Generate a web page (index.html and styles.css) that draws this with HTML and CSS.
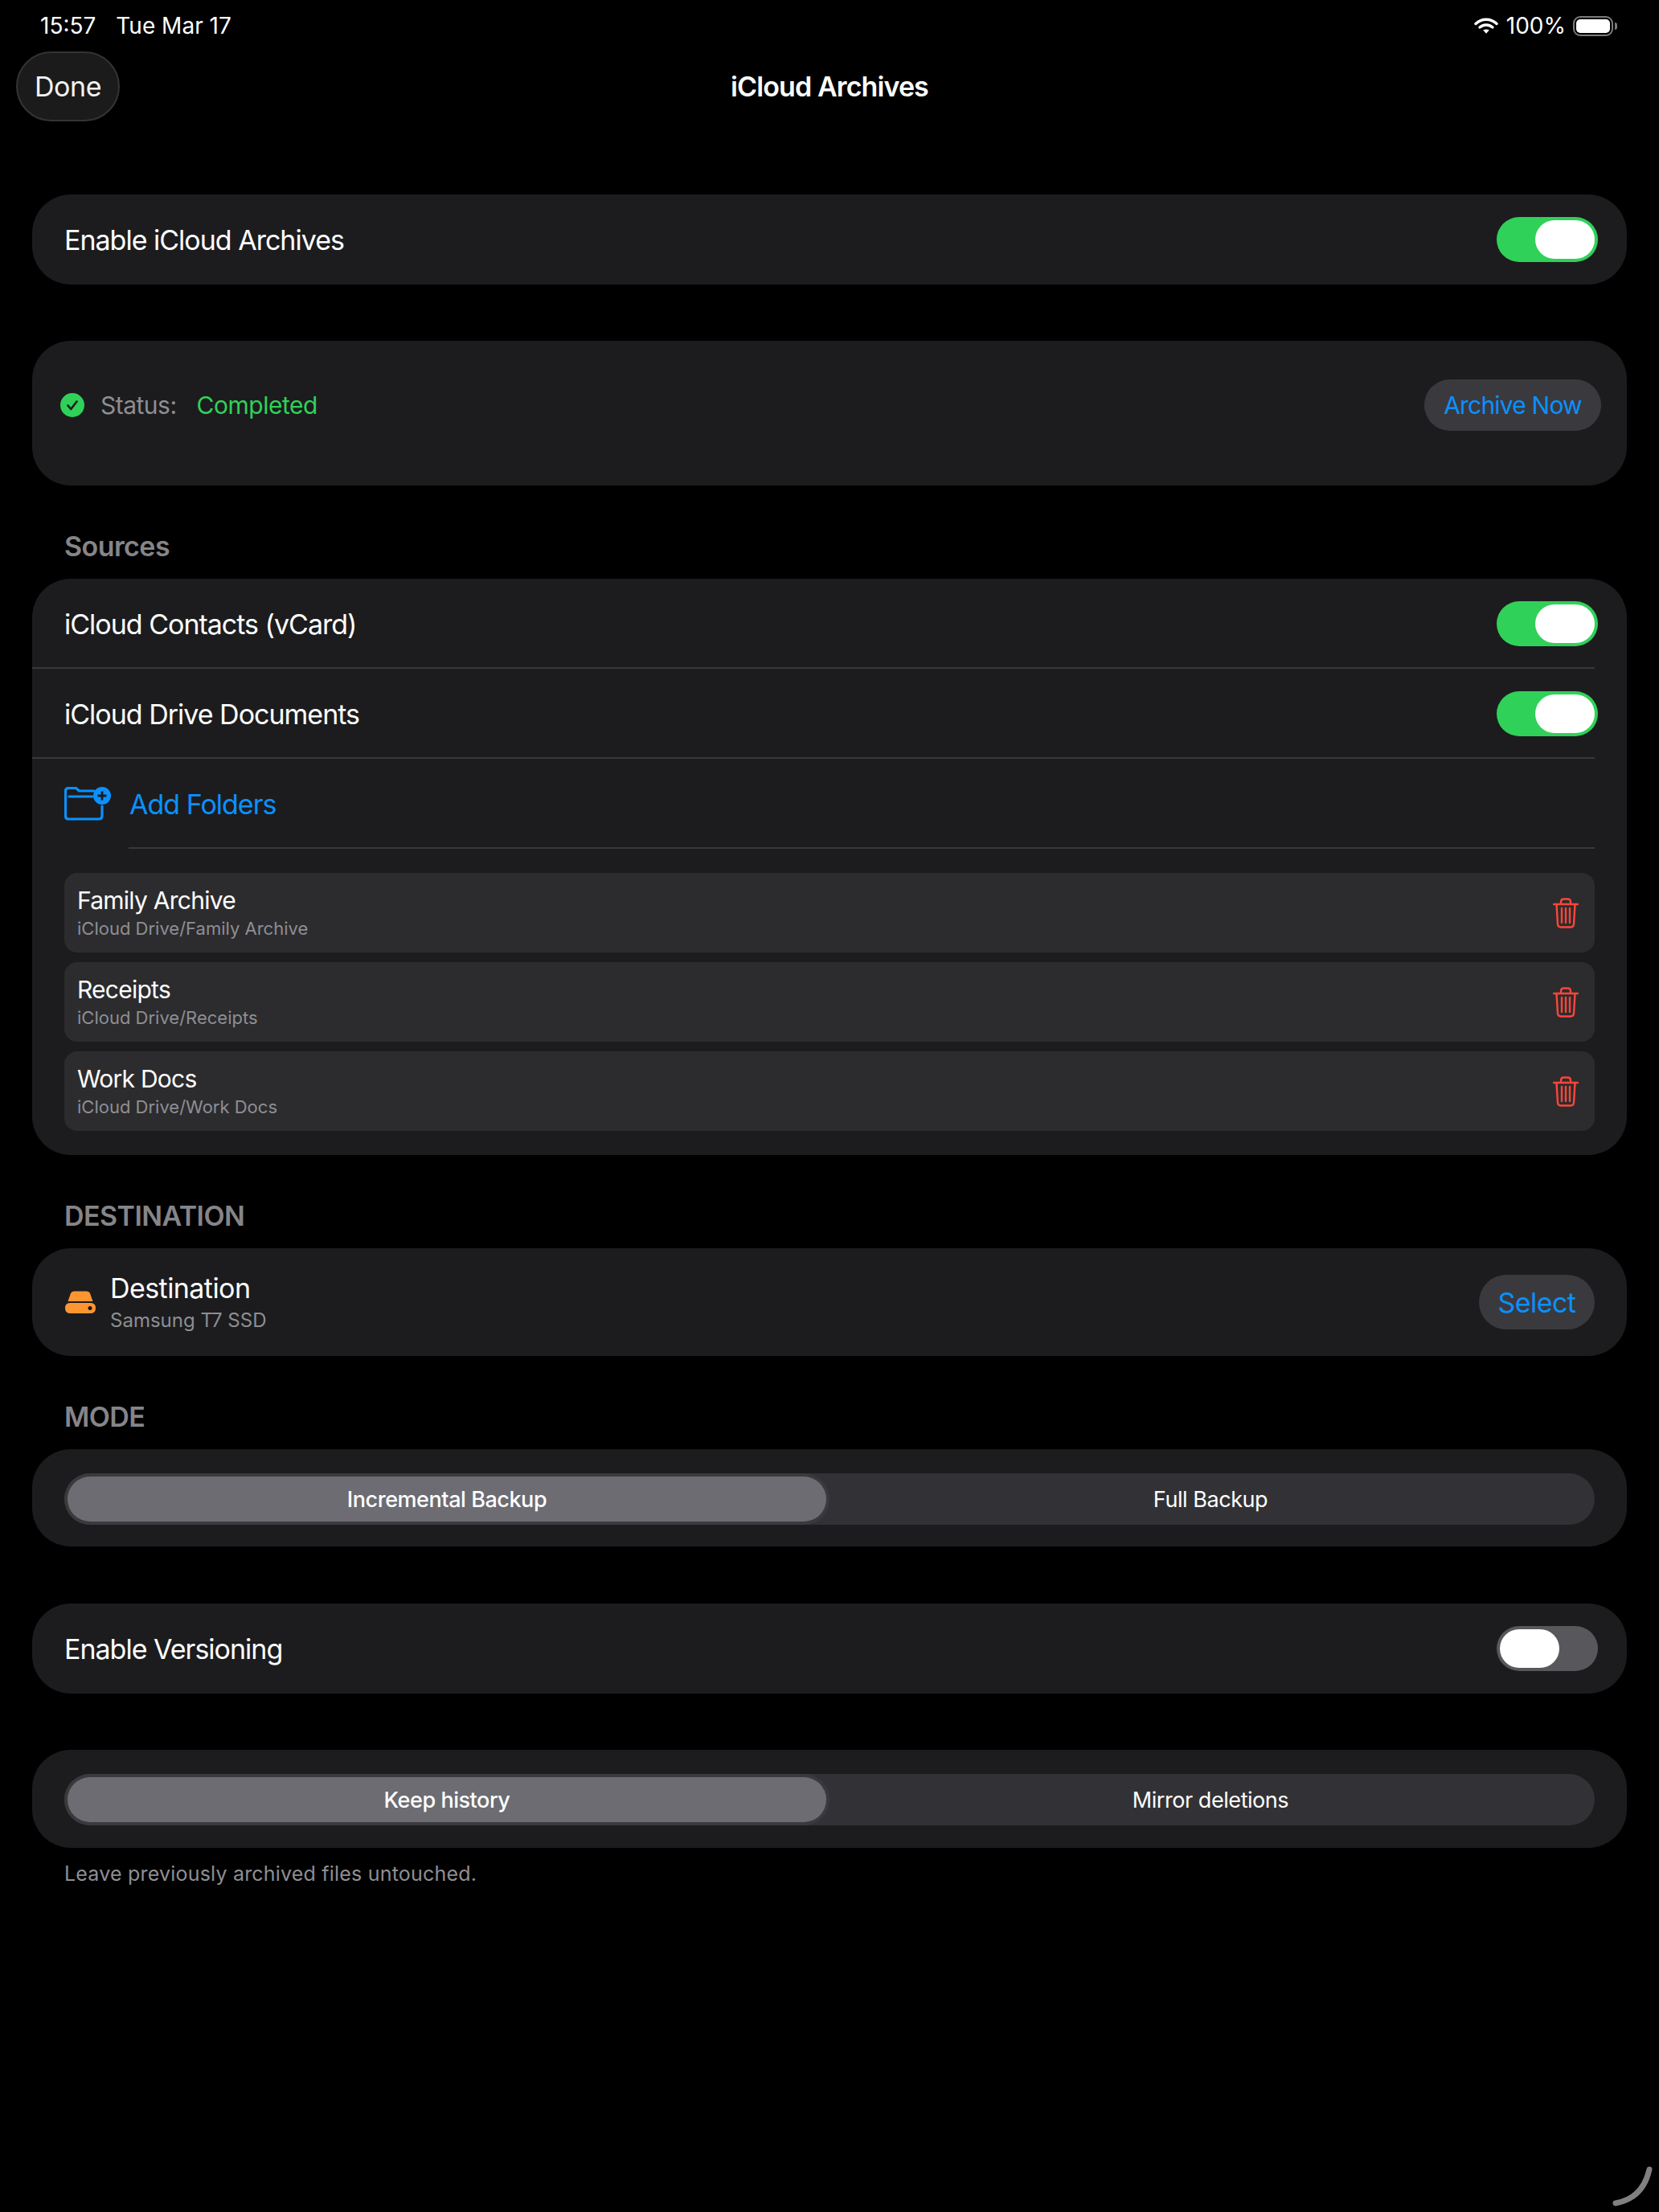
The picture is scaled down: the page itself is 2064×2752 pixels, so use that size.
FILE: index.html
```html
<!DOCTYPE html>
<html lang="en">
<head>
    <meta charset="UTF-8">
    <title>iCloud Archives</title>
    <link rel="stylesheet" href="styles.css">
</head>
<body>

<div class="statusBar">
    <div class="statusTime"><span>15:57</span><span>Tue Mar 17</span></div>
    <div class="statusRight">
        <svg class="wifiIcon" width="30" height="22" viewBox="0 0 30 22">
            <path d="M2 8.5C9.5 1.5 20.5 1.5 28 8.5" fill="none" stroke="#fff" stroke-width="3.4" stroke-linecap="round"/>
            <path d="M7 13C11.8 9 18.2 9 23 13" fill="none" stroke="#fff" stroke-width="3.4" stroke-linecap="round"/>
            <path d="M11.2 16.6C13.4 15 16.6 15 18.8 16.6L15 20.8Z" fill="#fff"/>
        </svg>
        <span>100%</span>
        <div class="battery"><div class="batteryFill"></div></div>
        <div class="batteryCap"></div>
    </div>
</div>

<div class="navBar">
    <div class="navLeft"><button class="doneButton">Done</button></div>
    <div class="navTitle">iCloud Archives</div>
    <div></div>
</div>

<div class="content">

    <div class="card cardFirst">
        <div class="row">
            <span class="rowLabel">Enable iCloud Archives</span>
            <div class="toggle"><div class="knob"></div></div>
        </div>
    </div>

    <div class="card statusCard">
        <svg class="statusIcon" width="30" height="30" viewBox="0 0 30 30">
            <circle cx="15" cy="15" r="15" fill="#30d158"/>
            <path d="M9.5 15.5L13.3 20L20.5 10.5" fill="none" stroke="#1c1c1e" stroke-width="2.6" stroke-linecap="round" stroke-linejoin="round"/>
        </svg>
        <span class="statusLabel">Status:</span>
        <span class="statusValue">Completed</span>
        <button class="pillButton archiveButton">Archive Now</button>
    </div>

    <div class="sectionTitle">Sources</div>
    <div class="card sourcesCard">
        <div class="row rowLine">
            <span class="rowLabel">iCloud Contacts (vCard)</span>
            <div class="toggle"><div class="knob"></div></div>
        </div>
        <div class="row rowLine">
            <span class="rowLabel">iCloud Drive Documents</span>
            <div class="toggle"><div class="knob"></div></div>
        </div>
        <div class="row addRow">
            <svg class="folderIcon" width="58" height="42" viewBox="0 0 58 42">
                <path d="M37 5H18.5L14.5 1.500H5.500Q1.500 1.500 1.500 5.500V36Q1.500 40 5.500 40H43Q47 40 47 36V24" fill="none" stroke="#0a91ff" stroke-width="3.200" stroke-linejoin="round" stroke-linecap="round"/>
                <path d="M6 12H35" fill="none" stroke="#0a91ff" stroke-width="3.200" stroke-linecap="round"/>
                <circle cx="47" cy="11" r="11" fill="#0a91ff"/>
                <path d="M47 5.500V16.500M41.500 11H52.500" fill="none" stroke="#1c1c1e" stroke-width="2.800"/>
            </svg>
            <span class="addLabel">Add Folders</span>
        </div>

        <div class="folderList">
            <div class="folderItem">
                <div>
                    <div class="folderName">Family Archive</div>
                    <div class="folderPath">iCloud Drive/Family Archive</div>
                </div>
                <svg class="trashIcon" width="32" height="38" viewBox="0 0 32 38">
                    <path d="M1 8H31M10 8V5Q10 1.5 13.5 1.5H18.5Q22 1.5 22 5V8M4.5 8L6 33Q6.3 36.5 10 36.5H22Q25.7 36.5 26 33L27.500 8M11 13V31M16 13V31M21 13V31" fill="none" stroke="#ff453a" stroke-width="2.400" stroke-linecap="round"/>
                </svg>
            </div>
            <div class="folderItem">
                <div>
                    <div class="folderName">Receipts</div>
                    <div class="folderPath">iCloud Drive/Receipts</div>
                </div>
                <svg class="trashIcon" width="32" height="38" viewBox="0 0 32 38">
                    <path d="M1 8H31M10 8V5Q10 1.5 13.5 1.5H18.5Q22 1.5 22 5V8M4.5 8L6 33Q6.3 36.5 10 36.5H22Q25.7 36.5 26 33L27.500 8M11 13V31M16 13V31M21 13V31" fill="none" stroke="#ff453a" stroke-width="2.400" stroke-linecap="round"/>
                </svg>
            </div>
            <div class="folderItem">
                <div>
                    <div class="folderName">Work Docs</div>
                    <div class="folderPath">iCloud Drive/Work Docs</div>
                </div>
                <svg class="trashIcon" width="32" height="38" viewBox="0 0 32 38">
                    <path d="M1 8H31M10 8V5Q10 1.5 13.5 1.5H18.5Q22 1.5 22 5V8M4.5 8L6 33Q6.3 36.5 10 36.5H22Q25.7 36.5 26 33L27.500 8M11 13V31M16 13V31M21 13V31" fill="none" stroke="#ff453a" stroke-width="2.400" stroke-linecap="round"/>
                </svg>
            </div>
        </div>
    </div>

    <div class="sectionTitle">DESTINATION</div>
    <div class="card destCard">
        <svg class="driveIcon" width="38" height="28" viewBox="0 0 38 28">
            <path d="M3.500 13L7 3Q8 0.500 11 0.500H27Q30 0.500 31 3L34.500 13Z" fill="#ff9530"/>
            <path d="M6 15H32Q38 15 38 21.500Q38 28 32 28H6Q0 28 0 21.500Q0 15 6 15Z" fill="#ff9530"/>
            <circle cx="31" cy="21.500" r="2.500" fill="#1c1c1e"/>
        </svg>
        <div class="destText">
            <div class="destName">Destination</div>
            <div class="destDrive">Samsung T7 SSD</div>
        </div>
        <button class="pillButton selectButton">Select</button>
    </div>

    <div class="sectionTitle">MODE</div>
    <div class="card segmentCard">
        <div class="segmented">
            <div class="segment segmentOn">Incremental Backup</div>
            <div class="segment">Full Backup</div>
        </div>
    </div>

    <div class="card versionCard">
        <div class="row">
            <span class="rowLabel">Enable Versioning</span>
            <div class="toggle toggleOff"><div class="knob"></div></div>
        </div>
    </div>

    <div class="card segmentCard historyCard">
        <div class="segmented">
            <div class="segment segmentOn">Keep history</div>
            <div class="segment">Mirror deletions</div>
        </div>
    </div>
    <div class="footNote">Leave previously archived files untouched.</div>

</div>

<svg class="cornerArc" width="60" height="60" viewBox="0 0 60 60">
    <path d="M6 52Q40 46 48 10" fill="none" stroke="#808080" stroke-width="7" stroke-linecap="round"/>
</svg>

</body>
</html>
```

FILE: styles.css
```css
html, body {
    margin: 0;
    padding: 0;
    background-color: #000;
}
body {
    font-family: 'Inter', 'Liberation Sans', sans-serif;
    color: #fff;
    width: 2064px;
    height: 2752px;
    overflow: hidden;
    position: relative;
}
button {
    font-family: inherit;
    border: 0;
    padding: 0;
}

/* Inter runs wider than the system font */
.statusLabel, .statusValue, .selectButton, .destName, .sectionTitle {
    letter-spacing: -0.0167em;
}
.rowLabel, .addLabel {
    letter-spacing: -1px;
}

.statusBar {
    height: 64px;
    display: flex;
    justify-content: space-between;
    align-items: center;
    padding: 0 52px 0 50px;
    font-size: 28px;
}
.statusTime {
    display: flex;
    gap: 25px;
}
.statusRight {
    display: flex;
    align-items: center;
}
.wifiIcon {
    margin-right: 10px;
}
.battery {
    width: 50px;
    height: 25px;
    box-sizing: border-box;
    border: 2px solid #7b7b7b;
    border-radius: 9px;
    padding: 2px;
    margin-left: 9px;
}
.batteryFill {
    height: 100%;
    background-color: #fff;
    border-radius: 5px;
}
.batteryCap {
    width: 3px;
    height: 9px;
    margin-left: 2px;
    background-color: #7b7b7b;
    border-radius: 0 3px 3px 0;
}

.navBar {
    height: 87px;
    display: grid;
    grid-template-columns: 1fr auto 1fr;
    align-items: center;
}
.navLeft {
    padding-left: 20px;
}
.doneButton {
    width: 129px;
    height: 87px;
    box-sizing: border-box;
    border: 2px solid #343434;
    border-radius: 44px;
    background-color: #1b1b1b;
    color: #f2f2f2;
    font-size: 34px;
    letter-spacing: -0.4px;
}
.navTitle {
    font-size: 34px;
    font-weight: 600;
    letter-spacing: -0.9px;
}

.content {
    padding: 0 40px;
}
.card {
    background-color: #1c1c1e;
    border-radius: 48px;
}
.cardFirst {
    margin-top: 91px;
}
.row {
    height: 112px;
    display: flex;
    align-items: center;
    justify-content: space-between;
    padding: 0 36px 0 40px;
    box-sizing: border-box;
}
.rowLabel {
    font-size: 34px;
}
.rowLine {
    box-shadow: inset 0 -2px 0 0 #38383a;
}

.toggle {
    width: 126px;
    height: 56px;
    box-sizing: border-box;
    padding: 4px;
    border-radius: 28px;
    background-color: #30d158;
    display: flex;
    justify-content: flex-end;
}
.toggleOff {
    background-color: #58585c;
    justify-content: flex-start;
}
.knob {
    width: 74px;
    height: 48px;
    border-radius: 24px;
    background-color: #fff;
}

.statusCard {
    margin-top: 70px;
    height: 180px;
    display: flex;
    align-items: center;
    padding: 0 32px 20px 35px;
    box-sizing: border-box;
    font-size: 30px;
}
.statusLabel {
    margin-left: 20px;
    color: #8e8e93;
}
.statusValue {
    margin-left: 25px;
    color: #30d158;
}
.pillButton {
    background-color: #3a3a3e;
    color: #0a91ff;
    margin-left: auto;
}
.archiveButton {
    width: 220px;
    height: 64px;
    border-radius: 32px;
    font-size: 30px;
    letter-spacing: -0.8px;
}

.sectionTitle {
    font-size: 34px;
    font-weight: 600;
    color: #858589;
    padding-left: 40px;
    height: 41px;
    line-height: 41px;
    margin-top: 55px;
    margin-bottom: 20px;
}

.sourcesCard {
    padding-bottom: 30px;
}
.sourcesCard .rowLine {
    margin-right: 40px;
    padding-right: 0;
}
.sourcesCard .rowLine .toggle {
    margin-right: -4px;
}
.addRow {
    justify-content: flex-start;
    margin-right: 40px;
    padding-right: 0;
    position: relative;
}
.addRow::after {
    content: "";
    position: absolute;
    left: 120px;
    right: 0;
    bottom: 0;
    height: 2px;
    background-color: #38383a;
}
.folderIcon {
    margin-right: 23px;
}
.addLabel {
    font-size: 34px;
    color: #0a91ff;
}
.folderList {
    margin: 30px 40px 0;
    display: flex;
    flex-direction: column;
    gap: 12px;
}
.folderItem {
    height: 99px;
    border-radius: 16px;
    background-color: #2c2c2e;
    display: flex;
    align-items: center;
    justify-content: space-between;
    padding: 0 20px 0 16px;
    box-sizing: border-box;
}
.folderName {
    font-size: 30px;
    line-height: 36px;
    margin-bottom: 3px;
    letter-spacing: -0.75px;
}
.folderPath {
    font-size: 22px;
    line-height: 28px;
    color: #8e8e93;
}

.destCard {
    height: 134px;
    display: flex;
    align-items: center;
    padding: 0 40px 0 41px;
}
.driveIcon {
    margin-right: 18px;
}
.destName {
    font-size: 34px;
    line-height: 42px;
    margin-bottom: 4px;
}
.destDrive {
    font-size: 24px;
    line-height: 30px;
    color: #8e8e93;
}
.selectButton {
    width: 144px;
    height: 68px;
    border-radius: 34px;
    font-size: 34px;
}

.segmentCard {
    height: 121px;
    padding: 30px 40px;
    box-sizing: border-box;
}
.segmented {
    height: 64px;
    border-radius: 32px;
    background-color: #323236;
    display: flex;
    padding: 4px 0 4px 4px;
    box-sizing: border-box;
}
.segment {
    flex: 1;
    display: flex;
    align-items: center;
    justify-content: center;
    font-size: 27px;
    letter-spacing: -0.45px;
    border-radius: 28px;
}
.segmentOn {
    flex: none;
    width: 944px;
    font-weight: 500;
    background-color: #6c6c72;
    box-shadow: 0 0 0 4px #3a3a3e;
}
.versionCard {
    margin-top: 71px;
}
.historyCard {
    margin-top: 70px;
    height: 122px;
}
.footNote {
    margin: 17px 0 0 40px;
    font-size: 25px;
    line-height: 30px;
    letter-spacing: 0.2px;
    color: #8e8e93;
}

.cornerArc {
    position: absolute;
    left: 2004px;
    top: 2689px;
}
```
